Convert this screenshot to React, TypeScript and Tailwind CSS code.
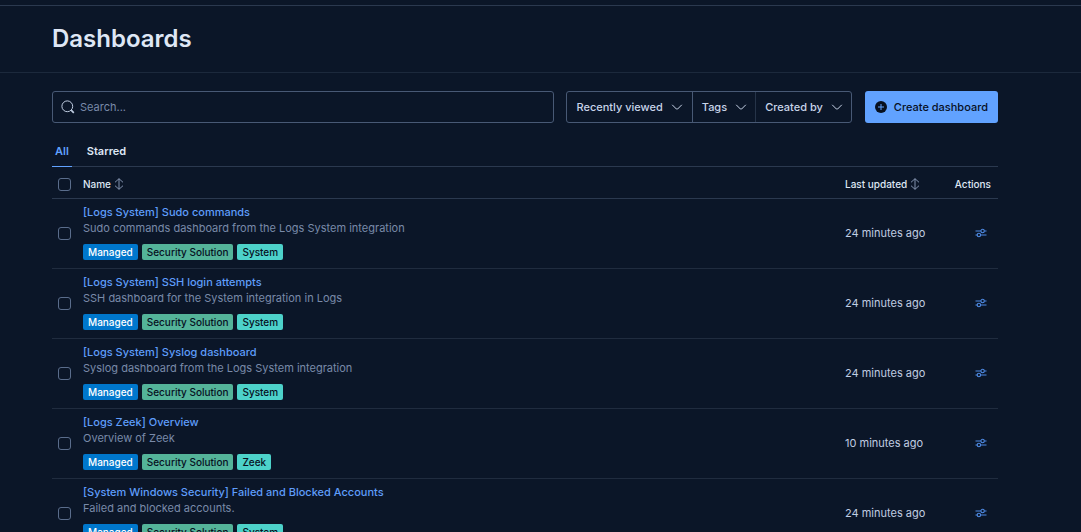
import { useState } from 'react';

interface Dashboard {
  title: string;
  description: string;
  solution: string;
  updated: string;
}

const dashboards: Dashboard[] = [
  {
    title: '[Logs System] Sudo commands',
    description: 'Sudo commands dashboard from the Logs System integration',
    solution: 'System',
    updated: '24 minutes ago',
  },
  {
    title: '[Logs System] SSH login attempts',
    description: 'SSH dashboard for the System integration in Logs',
    solution: 'System',
    updated: '24 minutes ago',
  },
  {
    title: '[Logs System] Syslog dashboard',
    description: 'Syslog dashboard from the Logs System integration',
    solution: 'System',
    updated: '24 minutes ago',
  },
  {
    title: '[Logs Zeek] Overview',
    description: 'Overview of Zeek',
    solution: 'Zeek',
    updated: '10 minutes ago',
  },
  {
    title: '[System Windows Security] Failed and Blocked Accounts',
    description: 'Failed and blocked accounts.',
    solution: 'System',
    updated: '24 minutes ago',
  },
];

function SearchIcon() {
  return (
    <svg width="14" height="14" viewBox="0 0 14 14" fill="none" stroke="currentColor">
      <circle cx="6.3" cy="6.3" r="5.4" />
      <path d="M10.2 10.2l2.6 2.6" strokeWidth="1.7" />
    </svg>
  );
}

function ChevronIcon() {
  return (
    <svg width="12" height="12" viewBox="0 0 12 12" fill="none" stroke="currentColor">
      <path d="M1.2 3.8l4.2 4.2q.6.5 1.2 0l4.2-4.2" />
    </svg>
  );
}

function PlusIcon() {
  return (
    <svg width="12" height="12" viewBox="0 0 12 12">
      <circle cx="6" cy="6" r="6" fill="#07101f" />
      <path d="M6 3v6M3 6h6" stroke="#61a2ff" />
    </svg>
  );
}

function SortIcon() {
  return (
    <svg width="10" height="12" viewBox="0 0 10 12" fill="none" stroke="#8e9fbc">
      <path d="M5 .7v10.6M1 4.3L5 .7l4 3.6M1 7.7l4 3.6 4-3.6" strokeWidth=".9" />
    </svg>
  );
}

function ControlsIcon() {
  return (
    <svg width="12" height="10" viewBox="0 0 12 10" fill="none" stroke="currentColor" strokeWidth="1.1">
      <path d="M.5 3h5.4M9.3 3h2.2M.5 7h1.7M5.6 7h5.9" />
      <circle cx="7.6" cy="3" r="1.7" />
      <circle cx="3.9" cy="7" r="1.7" />
    </svg>
  );
}

function Checkbox({ label }: { label: string }) {
  return (
    <input
      type="checkbox"
      aria-label={label}
      className="block size-[13px] appearance-none rounded-[3px] border border-[#5a6d8c] checked:bg-[#61a2ff]"
    />
  );
}

function DashboardRow({ item }: { item: Dashboard }) {
  return (
    <tr className="border-b border-[#202c3f]">
      <td className="pl-1.5">
        <Checkbox label={`Select ${item.title}`} />
      </td>
      <td className="pt-[5px] pb-2">
        <a href="#" className="block leading-4 font-medium text-[#5f9dfa]">
          {item.title}
        </a>
        <p className="leading-4 text-[#798aa8]">{item.description}</p>
        <div className="mt-2 flex gap-1 text-[10px] leading-4 font-medium text-[#07101f]">
          <span className="rounded-xs bg-[#0077cc] px-[5px] text-white">Managed</span>
          <span className="rounded-xs bg-[#54b399] px-[5px]">Security Solution</span>
          <span className="rounded-xs bg-[#4dd2ca] px-[5px]">{item.solution}</span>
        </div>
      </td>
      <td className="text-[#c0cde2]">{item.updated}</td>
      <td>
        <button aria-label={`View details of ${item.title}`} className="mr-[11px] ml-auto block text-[#4f8ae3]">
          <ControlsIcon />
        </button>
      </td>
    </tr>
  );
}

export default function App() {
  const [tab, setTab] = useState('All');
  const [query, setQuery] = useState('');

  return (
    <main className="h-screen overflow-hidden bg-[#0b1628] pt-[5px] font-[Inter,sans-serif] text-[11px] text-[#dfe7f5]">
      <header className="border-y border-t-[#2b394f] border-b-[#1c293c] py-[17px] pr-[83px] pl-[52px]">
        <h1 className="text-2xl font-semibold">Dashboards</h1>
      </header>

      <div className="pt-[18px] pr-[83px] pl-[52px]">
        <div className="flex h-8">
          <label className="flex flex-1 items-center gap-[5px] rounded-[3px] border border-[#485975] pl-2 text-[#c0cde2]">
            <SearchIcon />
            <input
              type="text"
              aria-label="Search dashboards"
              placeholder="Search..."
              value={query}
              onChange={(e) => setQuery(e.target.value)}
              className="min-w-0 flex-1 outline-none placeholder:text-[#798aa8]"
            />
          </label>
          <div className="ml-3 flex rounded-[3px] border border-[#485975] font-medium text-[#c8d4e8]">
            <button className="flex items-center gap-2 px-[9px]">
              Recently viewed
              <ChevronIcon />
            </button>
            <button className="flex items-center gap-2 border-l border-[#485975] pr-2 pl-[9px]">
              Tags
              <ChevronIcon />
            </button>
            <button className="flex items-center gap-2 border-l border-[#263449] pr-2 pl-[9px]">
              Created by
              <ChevronIcon />
            </button>
          </div>
          <button className="ml-[13px] flex items-center gap-[7px] rounded-[3px] bg-[#61a2ff] px-2.5 font-medium text-[#07101f]">
            <PlusIcon />
            Create dashboard
          </button>
        </div>

        <div role="tablist" className="mt-3 flex gap-3 border-b border-[#2b394f] font-semibold">
          {['All', 'Starred'].map((name) => (
            <button
              key={name}
              role="tab"
              aria-selected={tab === name}
              onClick={() => setTab(name)}
              className={`-mb-px h-8 border-b px-[3px] pt-0.5 ${
                tab === name ? 'border-[#61a2ff] text-[#61a2ff]' : 'border-transparent'
              }`}
            >
              {name}
            </button>
          ))}
        </div>

        <table className="w-full table-fixed border-collapse text-left">
          <colgroup>
            <col className="w-[31px]" />
            <col />
            <col className="w-[103px]" />
            <col className="w-[50px]" />
          </colgroup>
          <thead>
            <tr className="h-[31px] border-b border-[#2b394f] text-[10px]">
              <th className="pt-1 pl-1.5">
                <Checkbox label="Select all rows" />
              </th>
              <th className="pt-1 font-medium">
                <button className="flex items-center gap-[3px]">
                  Name
                  <SortIcon />
                </button>
              </th>
              <th className="pt-1 font-medium">
                <button className="flex items-center gap-[3px] whitespace-nowrap">
                  Last updated
                  <SortIcon />
                </button>
              </th>
              <th className="pt-1 pr-[7px] text-right font-medium">Actions</th>
            </tr>
          </thead>
          <tbody>
            {dashboards.map((item) => (
              <DashboardRow key={item.title} item={item} />
            ))}
          </tbody>
        </table>
      </div>
    </main>
  );
}
